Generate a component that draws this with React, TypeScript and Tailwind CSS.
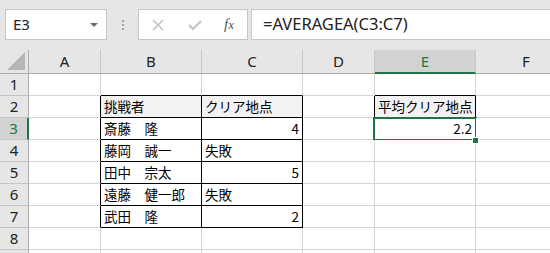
import React from 'react'

// 列幅（右罫線込み）
const COLS = [
  { key: 'A', w: 'w-[72px]' },
  { key: 'B', w: 'w-[101px]' },
  { key: 'C', w: 'w-[101px]' },
  { key: 'D', w: 'w-[72px]' },
  { key: 'E', w: 'w-[101px]' },
  { key: 'F', w: 'w-[101px]' },
]

type Cell = { text: string; right?: boolean }

const DATA: Record<number, Record<string, Cell>> = {
  2: { B: { text: '挑戦者' }, C: { text: 'クリア地点' }, E: { text: '平均クリア地点' } },
  3: { B: { text: '斎藤　隆' }, C: { text: '4', right: true }, E: { text: '2.2', right: true } },
  4: { B: { text: '藤岡　誠一' }, C: { text: '失敗' } },
  5: { B: { text: '田中　宗太' }, C: { text: '5', right: true } },
  6: { B: { text: '遠藤　健一郎' }, C: { text: '失敗' } },
  7: { B: { text: '武田　隆' }, C: { text: '2', right: true } },
}

// 9行目は下端で切れるので番号は出さない
const ROWS = [1, 2, 3, 4, 5, 6, 7, 8, 9]

// 罫線を引いた範囲（B2:C7 と E2）
function inTable(r: number, c: string) {
  if (r >= 2 && r <= 7 && (c === 'B' || c === 'C')) return true
  return r === 2 && c === 'E'
}

function nextCol(c: string) {
  const i = COLS.findIndex((col) => col.key === c)
  return COLS[i + 1]?.key ?? ''
}

function Toolbar() {
  return (
    <div className="h-[50px] bg-[#e6e6e6] flex items-start pt-[9px] pl-[5px]">
      {/* 名前ボックス */}
      <div className="w-[102px] h-[31px] bg-white border border-[#c6c6c6] flex items-center justify-between pl-[7px] pr-[8px]">
        <span className="text-[15px] text-[#222] font-['Noto_Sans',sans-serif]">E3</span>
        <span className="w-0 h-0 border-l-[4px] border-r-[4px] border-t-[4px] border-l-transparent border-r-transparent border-t-[#6b6b6b]" />
      </div>
      <div className="w-[31px] h-[31px] flex flex-col items-center justify-center gap-[2px]">
        <span className="w-[2px] h-[2px] bg-[#a0a0a0]" />
        <span className="w-[2px] h-[2px] bg-[#a0a0a0]" />
        <span className="w-[2px] h-[2px] bg-[#a0a0a0]" />
      </div>
      {/* キャンセル・入力・関数 */}
      <div className="w-[110px] h-[31px] bg-white border border-[#c6c6c6] flex items-center">
        <svg width="12" height="12" viewBox="0 0 12 12" className="ml-[13px]">
          <path d="M1 1L11 11M11 1L1 11" stroke="#c4c4c4" strokeWidth="1.6" fill="none" />
        </svg>
        <svg width="14" height="12" viewBox="0 0 14 12" className="ml-[24px]">
          <path d="M1 6L5 10L13 2" stroke="#c4c4c4" strokeWidth="2.2" fill="none" />
        </svg>
        <span className="ml-[22px] text-[15px] italic text-[#555] font-['Liberation_Serif',serif] leading-none">
          f<span className="text-[13px]">x</span>
        </span>
      </div>
      <div className="ml-[3px] flex-1 h-[31px] bg-white border border-[#c6c6c6] border-r-0 flex items-center pl-[11px]">
        <span className="text-[16.5px] text-[#222] font-['Noto_Sans',sans-serif]">=AVERAGEA(C3:C7)</span>
      </div>
    </div>
  )
}

function HeaderRow() {
  return (
    <div className="flex h-[24px] bg-[#e6e6e6] border-b border-[#ababab]">
      <div className="w-[29px] shrink-0 border-r border-[#ababab] relative">
        <svg width="18" height="18" viewBox="0 0 18 18" className="absolute right-[3px] bottom-[3px]">
          <path d="M18 0L18 18L0 18Z" fill="#b6b6b6" />
        </svg>
      </div>
      {COLS.map((col) =>
        col.key === 'E' ? (
          <div
            key={col.key}
            className={`${col.w} shrink-0 bg-[#d2d2d2] border-r border-[#c6c6c6] border-b-2 border-b-[#217346] -mb-px flex items-center justify-center text-[15px] text-[#217346] font-['Noto_Sans',sans-serif]`}
          >
            {col.key}
          </div>
        ) : (
          <div
            key={col.key}
            className={`${col.w} shrink-0 border-r border-[#c6c6c6] flex items-center justify-center text-[15px] text-[#222] font-['Noto_Sans',sans-serif]`}
          >
            {col.key}
          </div>
        ),
      )}
    </div>
  )
}

function Row({ r }: { r: number }) {
  const selected = r === 3
  return (
    <div className="flex h-[22px]">
      <div
        className={
          selected
            ? "w-[29px] shrink-0 bg-[#d2d2d2] border-b border-[#c6c6c6] border-r-2 border-r-[#217346] flex items-center justify-center text-[15px] text-[#217346] font-['Noto_Sans',sans-serif]"
            : "w-[29px] shrink-0 bg-[#e6e6e6] border-b border-[#c6c6c6] border-r border-r-[#ababab] flex items-center justify-center text-[15px] text-[#222] font-['Noto_Sans',sans-serif]"
        }
      >
        {r < 9 ? r : ''}
      </div>
      {COLS.map((col) => {
        const cell = DATA[r]?.[col.key]
        const bottom = inTable(r, col.key) || inTable(r + 1, col.key)
        const right = inTable(r, col.key) || inTable(r, nextCol(col.key))
        const fill = r === 2 && inTable(r, col.key)
        return (
          <div
            key={col.key}
            className={[
              col.w,
              'shrink-0 relative flex items-center border-b border-r px-[3px]',
              bottom ? 'border-b-black' : 'border-b-[#d4d4d4]',
              right ? 'border-r-black' : 'border-r-[#d4d4d4]',
              fill ? 'bg-[#f2f2f2]' : 'bg-white',
              cell?.right ? 'justify-end' : 'justify-start',
            ].join(' ')}
          >
            {cell && (
              <span className="text-[13.5px] text-black whitespace-nowrap font-['Noto_Sans_CJK_JP',sans-serif] leading-none">
                {cell.text}
              </span>
            )}
            {selected && col.key === 'E' && (
              <>
                <div className="absolute -left-[2px] -top-[1px] w-[104px] h-[24px] border-2 border-[#217346] pointer-events-none" />
                <div className="absolute left-[97px] top-[19px] w-[7px] h-[7px] bg-[#217346] border border-white z-10" />
              </>
            )}
          </div>
        )
      })}
    </div>
  )
}

export default function App() {
  return (
    <div className="w-[550px] h-[253px] overflow-hidden bg-white">
      <Toolbar />
      <HeaderRow />
      {ROWS.map((r) => (
        <Row key={r} r={r} />
      ))}
    </div>
  )
}
